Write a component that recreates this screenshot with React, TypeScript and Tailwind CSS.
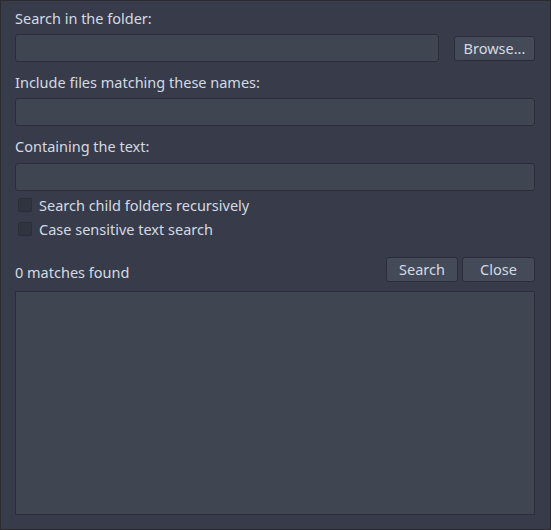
import { useState } from "react";

function Field() {
  return (
    <input
      type="text"
      className="h-[28px] w-full rounded-[3px] border border-[#2b2e39] bg-[#404552] px-2 text-[14.5px] text-[#d3dae3] outline-none"
    />
  );
}

function Button({ label, width }: { label: string; width: string }) {
  return (
    <button
      className={`h-[25px] ${width} rounded-[3px] border border-[#2b2e39] bg-[#444a58] text-[14.5px] leading-none text-[#d3dae3]`}
    >
      {label}
    </button>
  );
}

function Check({ label, checked, onToggle }: { label: string; checked: boolean; onToggle: () => void }) {
  return (
    <label className="flex h-[24px] items-center gap-[7px] pl-[3px]" onClick={onToggle}>
      <span className="flex h-[14px] w-[14px] items-center justify-center rounded-[2px] border border-[#2b2e39] bg-[#30343f]">
        {checked && <span className="h-[8px] w-[8px] bg-[#5294e2]" />}
      </span>
      <span className="text-[14.5px] leading-[20px]">{label}</span>
    </label>
  );
}

export default function App() {
  const [recursive, setRecursive] = useState(false);
  const [caseSensitive, setCaseSensitive] = useState(false);

  return (
    <div
      className="flex h-[530px] w-[551px] flex-col border border-[#2b2b2e] bg-[#383c4a] pl-[14px] pr-[15px] pt-[7px] pb-[14px] text-[#d3dae3]"
      style={{ fontFamily: '"Noto Sans", "Open Sans", sans-serif' }}
    >
      <div className="h-[20px] text-[14.5px] leading-[20px]">Search in the folder:</div>
      <div className="mt-[6px] flex items-center gap-[15px]">
        <Field />
        <Button label="Browse..." width="w-[81px] shrink-0" />
      </div>

      <div className="mt-[10px] h-[20px] text-[14.5px] leading-[20px]">Include files matching these names:</div>
      <div className="mt-[6px]">
        <Field />
      </div>

      <div className="mt-[10px] h-[20px] text-[14.5px] leading-[20px]">Containing the text:</div>
      <div className="mt-[7px]">
        <Field />
      </div>

      <div className="mt-[2px] flex flex-col">
        <Check label="Search child folders recursively" checked={recursive} onToggle={() => setRecursive(!recursive)} />
        <Check label="Case sensitive text search" checked={caseSensitive} onToggle={() => setCaseSensitive(!caseSensitive)} />
      </div>

      <div className="mt-[16px] flex items-center">
        <div className="flex-1 pt-[5px] text-[14.5px] leading-[20px]">0 matches found</div>
        <div className="flex gap-[4px]">
          <Button label="Search" width="w-[72px]" />
          <Button label="Close" width="w-[73px]" />
        </div>
      </div>

      <div className="mt-[9px] flex-1 border border-[#2b2e39] bg-[#404552]" />
    </div>
  );
}
